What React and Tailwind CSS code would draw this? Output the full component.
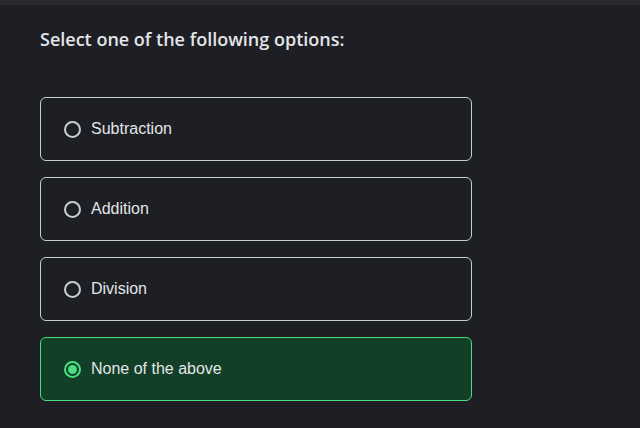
import React, { useState } from 'react';

const options = ['Subtraction', 'Addition', 'Division', 'None of the above'];

export default function App() {
  const [selected, setSelected] = useState(3);

  return (
    <div className="w-[640px] h-[428px] bg-[#1e1f24] overflow-hidden flex flex-col">
      <div className="h-[5px] bg-[#27292e] shrink-0" />
      <div className="px-10 pt-[21px]">
        <h2 className="text-[18px] font-semibold text-[#e3e5e8] font-['Open_Sans',sans-serif] leading-[26px]">
          Select one of the following options:
        </h2>
        <div className="mt-[45px] flex flex-col gap-4 w-[432px]">
          {options.map((opt, i) => {
            const active = i === selected;
            return (
              <button
                key={opt}
                onClick={() => setSelected(i)}
                className={
                  active
                    ? 'h-16 flex items-center gap-[10px] pl-[23px] rounded-md border border-[#4ade80] bg-[#113f27] text-left'
                    : 'h-16 flex items-center gap-[10px] pl-[23px] rounded-md border border-[#c3ccd0] bg-transparent text-left'
                }
              >
                <span
                  className={
                    active
                      ? 'w-[17px] h-[17px] rounded-full border-2 border-[#4ade80] flex items-center justify-center'
                      : 'w-[17px] h-[17px] rounded-full border-2 border-[#c9cdd1]'
                  }
                >
                  {active && <span className="w-[9px] h-[9px] rounded-full bg-[#4ade80]" />}
                </span>
                <span className="text-[16px] text-[#e3e5e8] font-['Liberation_Sans',Arial,sans-serif]">{opt}</span>
              </button>
            );
          })}
        </div>
      </div>
    </div>
  );
}
